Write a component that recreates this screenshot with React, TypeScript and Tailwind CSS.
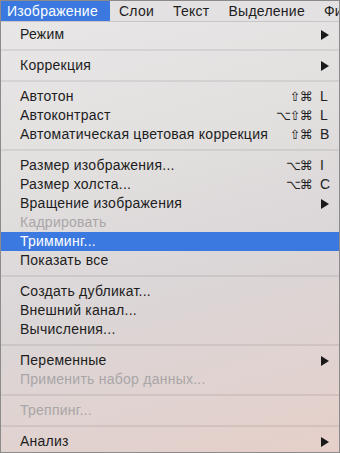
import React from 'react';

type Item =
  | { kind: 'sep' }
  | {
      kind: 'item';
      label: string;
      mods?: string[];
      keyChar?: string;
      submenu?: boolean;
      disabled?: boolean;
      active?: boolean;
    };

const items: Item[] = [
  { kind: 'item', label: 'Режим', submenu: true },
  { kind: 'sep' },
  { kind: 'item', label: 'Коррекция', submenu: true },
  { kind: 'sep' },
  { kind: 'item', label: 'Автотон', mods: ['⇧', '⌘'], keyChar: 'L' },
  { kind: 'item', label: 'Автоконтраст', mods: ['⌥', '⇧', '⌘'], keyChar: 'L' },
  { kind: 'item', label: 'Автоматическая цветовая коррекция', mods: ['⇧', '⌘'], keyChar: 'B' },
  { kind: 'sep' },
  { kind: 'item', label: 'Размер изображения...', mods: ['⌥', '⌘'], keyChar: 'I' },
  { kind: 'item', label: 'Размер холста...', mods: ['⌥', '⌘'], keyChar: 'C' },
  { kind: 'item', label: 'Вращение изображения', submenu: true },
  { kind: 'item', label: 'Кадрировать', disabled: true },
  { kind: 'item', label: 'Тримминг...', active: true },
  { kind: 'item', label: 'Показать все' },
  { kind: 'sep' },
  { kind: 'item', label: 'Создать дубликат...' },
  { kind: 'item', label: 'Внешний канал...' },
  { kind: 'item', label: 'Вычисления...' },
  { kind: 'sep' },
  { kind: 'item', label: 'Переменные', submenu: true },
  { kind: 'item', label: 'Применить набор данных...', disabled: true },
  { kind: 'sep' },
  { kind: 'item', label: 'Треппинг...', disabled: true },
  { kind: 'sep' },
  { kind: 'item', label: 'Анализ', submenu: true },
];

const topMenus = ['Слои', 'Текст', 'Выделение', 'Фильтр'];

// widths of the modifier glyph cells, so the columns line up like the mac menu
const modWidth: Record<string, string> = {
  '⌥': 'w-[13px]',
  '⇧': 'w-[10px]',
  '⌘': 'w-[12px]',
};

function Arrow() {
  return (
    <svg width="8" height="10" viewBox="0 0 8 10" className="shrink-0">
      <polygon points="0,0 8,5 0,10" fill="#1a1a1a" />
    </svg>
  );
}

export default function App() {
  return (
    <div
      className="w-[340px] h-[453px] overflow-hidden border border-[#8c8a8b] bg-[linear-gradient(165deg,#e9e7e7_0%,#e2dfdf_35%,#dbd6d7_60%,#e1d2cf_85%,#e6cfc9_100%)] text-[14px] tracking-[0.25px] text-[#1d1d1d]"
      style={{ fontFamily: '"Liberation Sans", Arial, sans-serif' }}
    >
      {/* Menu bar */}
      <div className="flex h-[21px] items-stretch overflow-hidden border-b border-[#c9c6c7] bg-[#e4e1e2] whitespace-nowrap">
        <div className="flex items-center bg-[#3b79e0] pl-[6px] pr-[12px] text-white">Изображение</div>
        <div className="flex items-center gap-[19px] pl-[9px]">
          {topMenus.map((m) => (
            <span key={m}>{m}</span>
          ))}
        </div>
      </div>

      {/* Menu body */}
      <div className="flex flex-col pt-[3px]">
        {items.map((it, i) => {
          if (it.kind === 'sep') {
            return (
              <div key={i} className="flex h-[12px] items-center">
                <div className="h-[2px] w-full bg-black/[0.07]" />
              </div>
            );
          }
          return (
            <div
              key={i}
              className={
                'flex h-[19px] items-center justify-between pl-[19px] pr-[10px] whitespace-nowrap ' +
                (it.active ? 'bg-[#3b79e0] text-white' : it.disabled ? 'text-[#a9a6a7]' : '')
              }
            >
              <span>{it.label}</span>
              {it.submenu && <Arrow />}
              {it.keyChar && (
                <span className="flex items-center tracking-normal text-[#222]">
                  {it.mods?.map((m) => (
                    <span
                      key={m}
                      className={'flex justify-center text-[13px] ' + modWidth[m]}
                      style={{ fontFamily: '"DejaVu Sans", sans-serif' }}
                    >
                      {m}
                    </span>
                  ))}
                  <span className="ml-[8px] w-[9px]">{it.keyChar}</span>
                </span>
              )}
            </div>
          );
        })}
      </div>
    </div>
  );
}
